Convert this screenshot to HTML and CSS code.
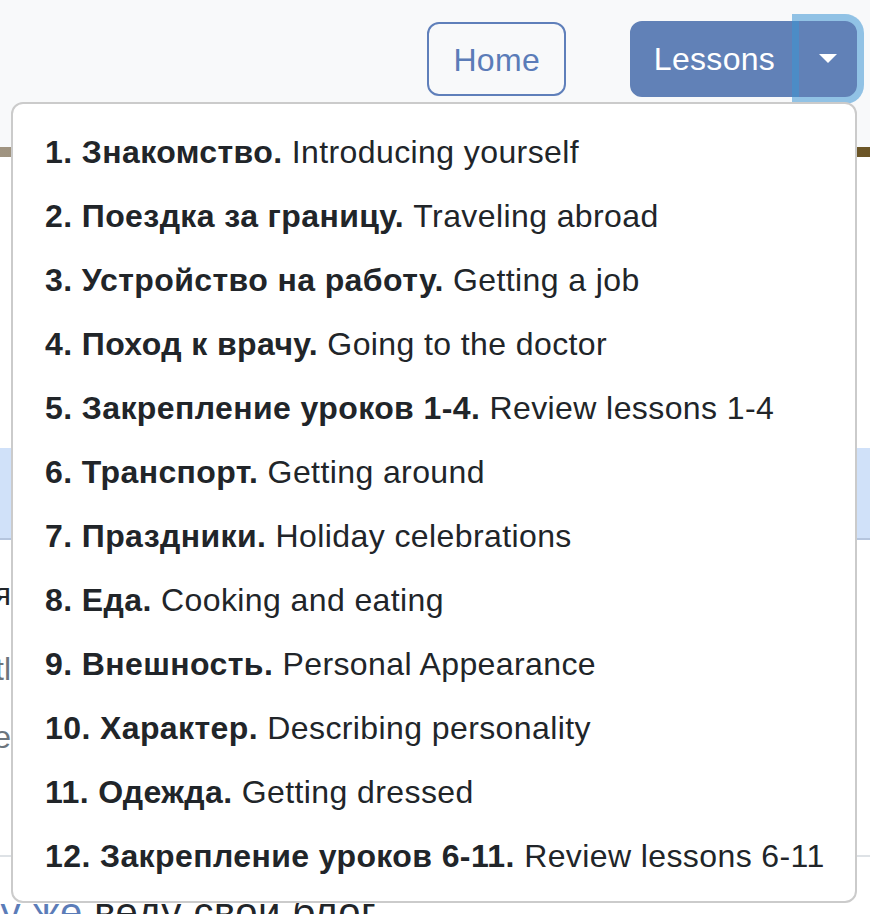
FILE: index.html
```html
<!DOCTYPE html>
<html lang="ru">
<head>
<meta charset="utf-8">
<title>Lessons</title>
<link rel="stylesheet" href="styles.css">
</head>
<body>
<header class="topbar">
  <nav class="nav">
    <a class="btn btn-outline" href="#">Home</a>
    <div class="btn-group">
      <a class="btn btn-primary btn-main" href="#">Lessons</a>
      <button class="btn btn-primary btn-toggle" type="button" aria-expanded="true"><span class="caret"></span></button>
      <ul class="dropdown">
        <li><a class="dropdown-item" href="#"><b>1. Знакомство.</b> Introducing yourself</a></li>
        <li><a class="dropdown-item" href="#"><b>2. Поездка за границу.</b> Traveling abroad</a></li>
        <li><a class="dropdown-item" href="#"><b>3. Устройство на работу.</b> Getting a job</a></li>
        <li><a class="dropdown-item" href="#"><b>4. Поход к врачу.</b> Going to the doctor</a></li>
        <li><a class="dropdown-item" href="#"><b>5. Закрепление уроков 1-4.</b> Review lessons 1-4</a></li>
        <li><a class="dropdown-item" href="#"><b>6. Транспорт.</b> Getting around</a></li>
        <li><a class="dropdown-item" href="#"><b>7. Праздники.</b> Holiday celebrations</a></li>
        <li><a class="dropdown-item" href="#"><b>8. Еда.</b> Cooking and eating</a></li>
        <li><a class="dropdown-item" href="#"><b>9. Внешность.</b> Personal Appearance</a></li>
        <li><a class="dropdown-item" href="#"><b>10. Характер.</b> Describing personality</a></li>
        <li><a class="dropdown-item" href="#"><b>11. Одежда.</b> Getting dressed</a></li>
        <li><a class="dropdown-item" href="#"><b>12. Закрепление уроков 6-11.</b> Review lessons 6-11</a></li>
      </ul>
    </div>
  </nav>
</header>
<div class="banner"></div>
<main class="content">
  <div class="alert"></div>
  <p class="peek peek-dark"><span>Меня</span></p>
  <p class="peek peek-muted peek-2"><span>subtl</span></p>
  <p class="peek peek-muted peek-3"><span>Hope</span></p>
  <hr class="rule">
  <p class="lead-line"><a class="link" href="#">тому же</a> веду свой блог</p>
</main>
</body>
</html>
```

FILE: styles.css
```css
* { box-sizing: border-box; }
html, body { margin: 0; padding: 0; }
body {
  background: #ffffff;
  font-family: "Liberation Sans", Arial, sans-serif;
  color: #212529;
  font-size: 32px;
  line-height: 48px;
  overflow: hidden;
  height: 914px;
}
.topbar {
  background: #f8f9fa;
  height: 147px;
}
.nav {
  display: flex;
  justify-content: flex-end;
  align-items: flex-start;
  gap: 64px;
  padding: 21px 13px 0 0;
}
.btn {
  display: inline-flex;
  align-items: center;
  justify-content: center;
  height: 76px;
  padding: 12px 24px;
  border: 2px solid transparent;
  border-radius: 12px;
  font-family: inherit;
  font-size: 32px;
  line-height: 48px;
  letter-spacing: 0.3px;
  text-decoration: none;
  cursor: pointer;
}
.btn-outline {
  color: #5b7cb8;
  border-color: #5f7fba;
  background: transparent;
  height: 74px;
  margin-top: 1px;
  padding-top: 14px;
}
.btn-primary {
  background: #6181b7;
  border-color: #6181b7;
  color: #ffffff;
}
.btn-group {
  position: relative;
  display: inline-flex;
}
.btn-main {
  border-top-right-radius: 0;
  border-bottom-right-radius: 0;
  width: 169px;
}
.btn-toggle {
  position: relative;
  z-index: 1;
  width: 58px;
  padding: 12px 18px;
  border-top-left-radius: 0;
  border-bottom-left-radius: 0;
  box-shadow: 0 0 0 7px rgba(60, 150, 212, 0.55);
}
.caret {
  display: block;
  width: 0;
  height: 0;
  margin-top: -2px;
  border-top: 9px solid #ffffff;
  border-left: 9px solid transparent;
  border-right: 9px solid transparent;
}
.dropdown {
  position: absolute;
  z-index: 5;
  top: 81px;
  right: 0;
  width: 846px;
  margin: 0;
  padding: 16px 0 13px;
  list-style: none;
  background: #ffffff;
  border: 2px solid #cbcbcb;
  border-radius: 12px;
}
.dropdown-item {
  display: block;
  padding: 8px 32px;
  color: #212529;
  text-decoration: none;
  white-space: nowrap;
  font-size: 32px;
  line-height: 48px;
  letter-spacing: 0.4px;
}
.dropdown-item b { font-weight: 700; }
.banner {
  height: 10px;
  background: linear-gradient(90deg, #a09481 0%, #8d7c5e 50%, #6b5526 100%);
}
.content {
  display: flex;
  flex-direction: column;
}
.alert {
  margin-top: 291px;
  height: 92px;
  background: #d0e1f9;
  border-bottom: 2px solid #b5c5de;
}
.peek {
  display: flex;
  justify-content: flex-end;
  width: 11px;
  overflow: hidden;
  white-space: nowrap;
  margin: 30px 0 0;
  height: 48px;
}
.peek-dark { color: #212529; }
.peek-muted { color: #6c757d; }
.peek-2 { margin-top: 27px; }
.peek-3 { margin-top: 20px; }
.rule {
  margin: 94px 0 0;
  border: 0;
  border-top: 2px solid #dee2e6;
  height: 0;
}
.lead-line {
  margin: 25px 0 0 -69px;
  white-space: nowrap;
  font-size: 40px;
  line-height: 60px;
  letter-spacing: 0.5px;
}
.link { color: #5b7cb8; text-decoration: none; }
```
